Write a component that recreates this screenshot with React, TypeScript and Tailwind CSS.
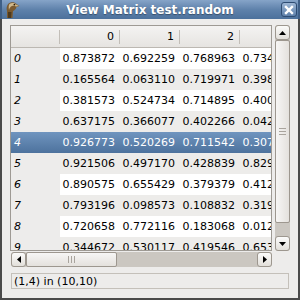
import React from "react";

const col0 = ["0.873872","0.165564","0.381573","0.637175","0.926773","0.921506","0.890575","0.793196","0.720658","0.344672"];
const col1 = ["0.692259","0.063110","0.524734","0.366077","0.520269","0.497170","0.655429","0.098573","0.772116","0.530117"];
const col2 = ["0.768963","0.719971","0.714895","0.402266","0.711542","0.428839","0.379379","0.108832","0.183068","0.419546"];
const col3 = ["0.734518","0.398842","0.400613","0.042917","0.307254","0.829361","0.412705","0.319428","0.012386","0.653170"];

function Arrow({ dir }: { dir: "up" | "down" | "left" | "right" }) {
  const pts =
    dir === "up" ? "0,4 7,4 3.5,0" :
    dir === "down" ? "0,0 7,0 3.5,4" :
    dir === "left" ? "4,0 4,7 0,3.5" : "0,0 0,7 4,3.5";
  const w = dir === "up" || dir === "down" ? 7 : 4;
  const h = dir === "up" || dir === "down" ? 4 : 7;
  return (
    <svg width={w} height={h} viewBox={`0 0 ${w} ${h}`}>
      <polygon points={pts} fill="#000" />
    </svg>
  );
}

function StepBtn({ dir }: { dir: "up" | "down" | "left" | "right" }) {
  return (
    <div className="w-[15px] h-[15px] shrink-0 rounded-[3px] border border-[#9d978f] bg-gradient-to-b from-[#fbfbfa] to-[#e2dfda] flex items-center justify-center">
      <Arrow dir={dir} />
    </div>
  );
}

export default function App() {
  const rows = Array.from({ length: 10 }, (_, i) => i);
  return (
    <div
      className="w-[300px] h-[300px] flex flex-col bg-[#edeceb] text-black overflow-hidden"
      style={{ fontFamily: '"DejaVu Sans", sans-serif' }}
    >
      {/* Title bar */}
      <div className="h-[19px] shrink-0 relative flex items-center justify-center bg-gradient-to-b from-[#86a4c8] via-[#5f82ab] to-[#4c719c] border-l-2 border-r-2 border-[#3f5f86]">
        <div className="absolute left-[2px] top-[1px] w-[16px] h-[17px]">
          <svg width="16" height="17" viewBox="0 0 16 17">
            <path d="M3 17 L3 10 C2 7 3 3 6 1.8 C8.5 0.8 11 1.5 12.5 3 L15.5 5 L12.5 6 C12 8 10.5 9.5 9 10 L8.5 17 Z" fill="#7a5a30" />
            <path d="M5.5 3 C7.5 1.6 10.5 1.8 12 3.5 L15 5 L12 5.4 C11 4.6 9.5 4.4 8 5 C6.5 5.6 5.5 7 5 9 C4.5 6.5 4.6 4.2 5.5 3 Z" fill="#cfb88c" />
            <circle cx="10.4" cy="3.6" r="0.9" fill="#2a1a08" />
            <path d="M4 11 L4 17 L7 17 L7.5 11 Z" fill="#4e3a1e" />
          </svg>
        </div>
        <span
          className="text-[12px] font-bold text-white leading-none"
          style={{ textShadow: "0 1px 1px rgba(0,0,0,0.35)" }}
        >
          View Matrix test.random
        </span>
        <div className="absolute right-[1px] top-[2px] w-[16px] h-[15px] rounded-[3px] border border-[#2e4c72] bg-gradient-to-b from-[#9db6d4] to-[#5d80aa] flex items-center justify-center">
          <svg width="10" height="10" viewBox="0 0 10 10">
            <path d="M2 2 L8 8 M8 2 L2 8" stroke="#fff" strokeWidth="2.4" strokeLinecap="square" />
          </svg>
        </div>
      </div>

      {/* Body */}
      <div className="flex-1 flex flex-col border-l-2 border-r-2 border-b-2 border-[#4a4a4a] pl-[8px] pt-[6px]">
        <div className="flex">
          {/* Viewport */}
          <div className="w-[262px] h-[226px] border border-[#9e9a94] bg-white overflow-hidden shrink-0">
            <div className="w-[300px] text-[11px] leading-none">
              {/* Header */}
              <div className="flex h-[22px] border-b border-[#bcb8b2] bg-gradient-to-b from-[#f4f3f2] to-[#e6e4e1]">
                <div className="w-[49px] h-full flex items-center justify-end">
                  <div className="w-px h-[14px] bg-[#c2beb8]" />
                </div>
                {["0", "1", "2", ""].map((h, i) => (
                  <div key={i} className="w-[60px] h-full flex items-center justify-end">
                    <span className="pr-[5px]">{h}</span>
                    <div className="w-px h-[14px] bg-[#c2beb8]" />
                  </div>
                ))}
              </div>
              {rows.map((r) => {
                const sel = r === 4;
                const odd = r % 2 === 1;
                return (
                  <div
                    key={r}
                    className={
                      "flex h-[21px] " +
                      (sel ? "bg-gradient-to-b from-[#7095bf] to-[#4d729d] text-white" : "")
                    }
                  >
                    <div
                      className={
                        "w-[49px] h-full flex items-center pl-[3px] italic " +
                        (sel ? "" : "bg-[#edeceb]")
                      }
                    >
                      {r}
                    </div>
                    {[col0, col1, col2, col3].map((c, ci) => (
                      <div
                        key={ci}
                        className={
                          "w-[60px] h-full flex items-center justify-end pr-[5px] " +
                          (sel ? "" : odd ? "bg-[#edecea]" : "bg-white")
                        }
                      >
                        {c[r]}
                      </div>
                    ))}
                  </div>
                );
              })}
            </div>
          </div>
          {/* Vertical scrollbar */}
          <div className="ml-[3px] w-[15px] h-[226px] flex flex-col bg-[#cbc7c1] rounded-[3px]">
            <StepBtn dir="up" />
            <div className="h-[183px] shrink-0 border border-[#9d978f] rounded-[2px] bg-gradient-to-r from-[#f7f6f5] to-[#e4e1dd] flex flex-col items-center justify-center gap-[2px]">
              <div className="w-[7px] h-px bg-[#a9a49d]" />
              <div className="w-[7px] h-px bg-[#a9a49d]" />
              <div className="w-[7px] h-px bg-[#a9a49d]" />
            </div>
            <div className="flex-1" />
            <StepBtn dir="down" />
          </div>
        </div>
        {/* Horizontal scrollbar */}
        <div className="mt-px ml-px w-[261px] h-[15px] flex bg-[#cbc7c1] rounded-[3px]">
          <StepBtn dir="left" />
          <div className="w-[91px] h-full shrink-0 border border-[#9d978f] rounded-[2px] bg-gradient-to-b from-[#f7f6f5] to-[#e4e1dd] flex items-center justify-center gap-[2px]">
            <div className="w-px h-[7px] bg-[#a9a49d]" />
            <div className="w-px h-[7px] bg-[#a9a49d]" />
            <div className="w-px h-[7px] bg-[#a9a49d]" />
          </div>
          <div className="flex-1" />
          <StepBtn dir="right" />
        </div>
        {/* Status bar */}
        <div className="mt-[6px] ml-px w-[278px] h-[16px] border border-[#c4c0ba] flex items-center pl-[2px] text-[11px] leading-none">
          (1,4) in (10,10)
        </div>
      </div>
    </div>
  );
}
